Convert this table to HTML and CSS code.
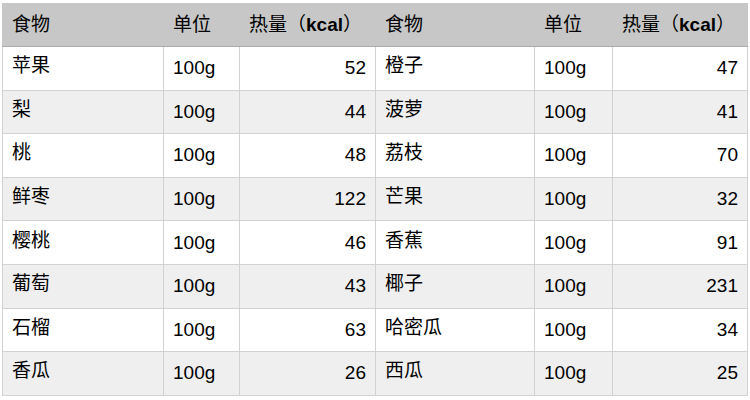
FILE: index.html
```html
<!DOCTYPE html>
<html lang="zh">
<head>
<meta charset="utf-8">
<link rel="stylesheet" href="styles.css">
</head>
<body>
<table class="tbl">
  <colgroup>
    <col class="c-name"><col class="c-unit"><col class="c-kcal">
    <col class="c-name2"><col class="c-unit2"><col class="c-kcal2">
  </colgroup>
  <thead>
    <tr>
      <th>食物</th><th>单位</th><th>热量（<b>kcal</b>）</th>
      <th>食物</th><th>单位</th><th>热量（<b>kcal</b>）</th>
    </tr>
  </thead>
  <tbody>
    <tr><td class="name">苹果</td><td>100g</td><td class="num">52</td><td class="name">橙子</td><td>100g</td><td class="num">47</td></tr>
    <tr><td class="name">梨</td><td>100g</td><td class="num">44</td><td class="name">菠萝</td><td>100g</td><td class="num">41</td></tr>
    <tr><td class="name">桃</td><td>100g</td><td class="num">48</td><td class="name">荔枝</td><td>100g</td><td class="num">70</td></tr>
    <tr><td class="name">鲜枣</td><td>100g</td><td class="num">122</td><td class="name">芒果</td><td>100g</td><td class="num">32</td></tr>
    <tr><td class="name">樱桃</td><td>100g</td><td class="num">46</td><td class="name">香蕉</td><td>100g</td><td class="num">91</td></tr>
    <tr><td class="name">葡萄</td><td>100g</td><td class="num">43</td><td class="name">椰子</td><td>100g</td><td class="num">231</td></tr>
    <tr><td class="name">石榴</td><td>100g</td><td class="num">63</td><td class="name">哈密瓜</td><td>100g</td><td class="num">34</td></tr>
    <tr><td class="name">香瓜</td><td>100g</td><td class="num">26</td><td class="name">西瓜</td><td>100g</td><td class="num">25</td></tr>
  </tbody>
</table>
</body>
</html>
```

FILE: styles.css
```css
html, body {
  margin: 0;
  padding: 0;
  background: #ffffff;
}
body {
  padding: 3px 0 0 2px;
  font-family: "Liberation Sans", "Noto Sans CJK SC", sans-serif;
  font-size: 19px;
  line-height: 22px;
  color: #000000;
}
.tbl {
  border-collapse: collapse;
  table-layout: fixed;
  width: 745px;
}
.c-name { width: 161px; }
.c-unit { width: 76px; }
.c-kcal { width: 136px; }
.c-name2 { width: 159px; }
.c-unit2 { width: 78px; }
.c-kcal2 { width: 135px; }
.tbl th, .tbl td {
  border: 1px solid #d2d2d2;
  padding: 0 9px;
  text-align: left;
  vertical-align: middle;
  white-space: nowrap;
  overflow: hidden;
}
.tbl thead th {
  background: #c6c7c6;
  height: 42px;
  font-weight: normal;
  border-color: #c6c7c6;
  border-bottom: 1px solid #a9aaa9;
}
.tbl thead th b {
  font-weight: bold;
}
.tbl tbody td {
  height: 42.6px;
}
.tbl tbody td.name {
  height: 38.6px;
  padding-bottom: 4px;
}
.tbl tbody tr:nth-child(even) td {
  background: #efefef;
}
.tbl td.num {
  text-align: right;
}
```
